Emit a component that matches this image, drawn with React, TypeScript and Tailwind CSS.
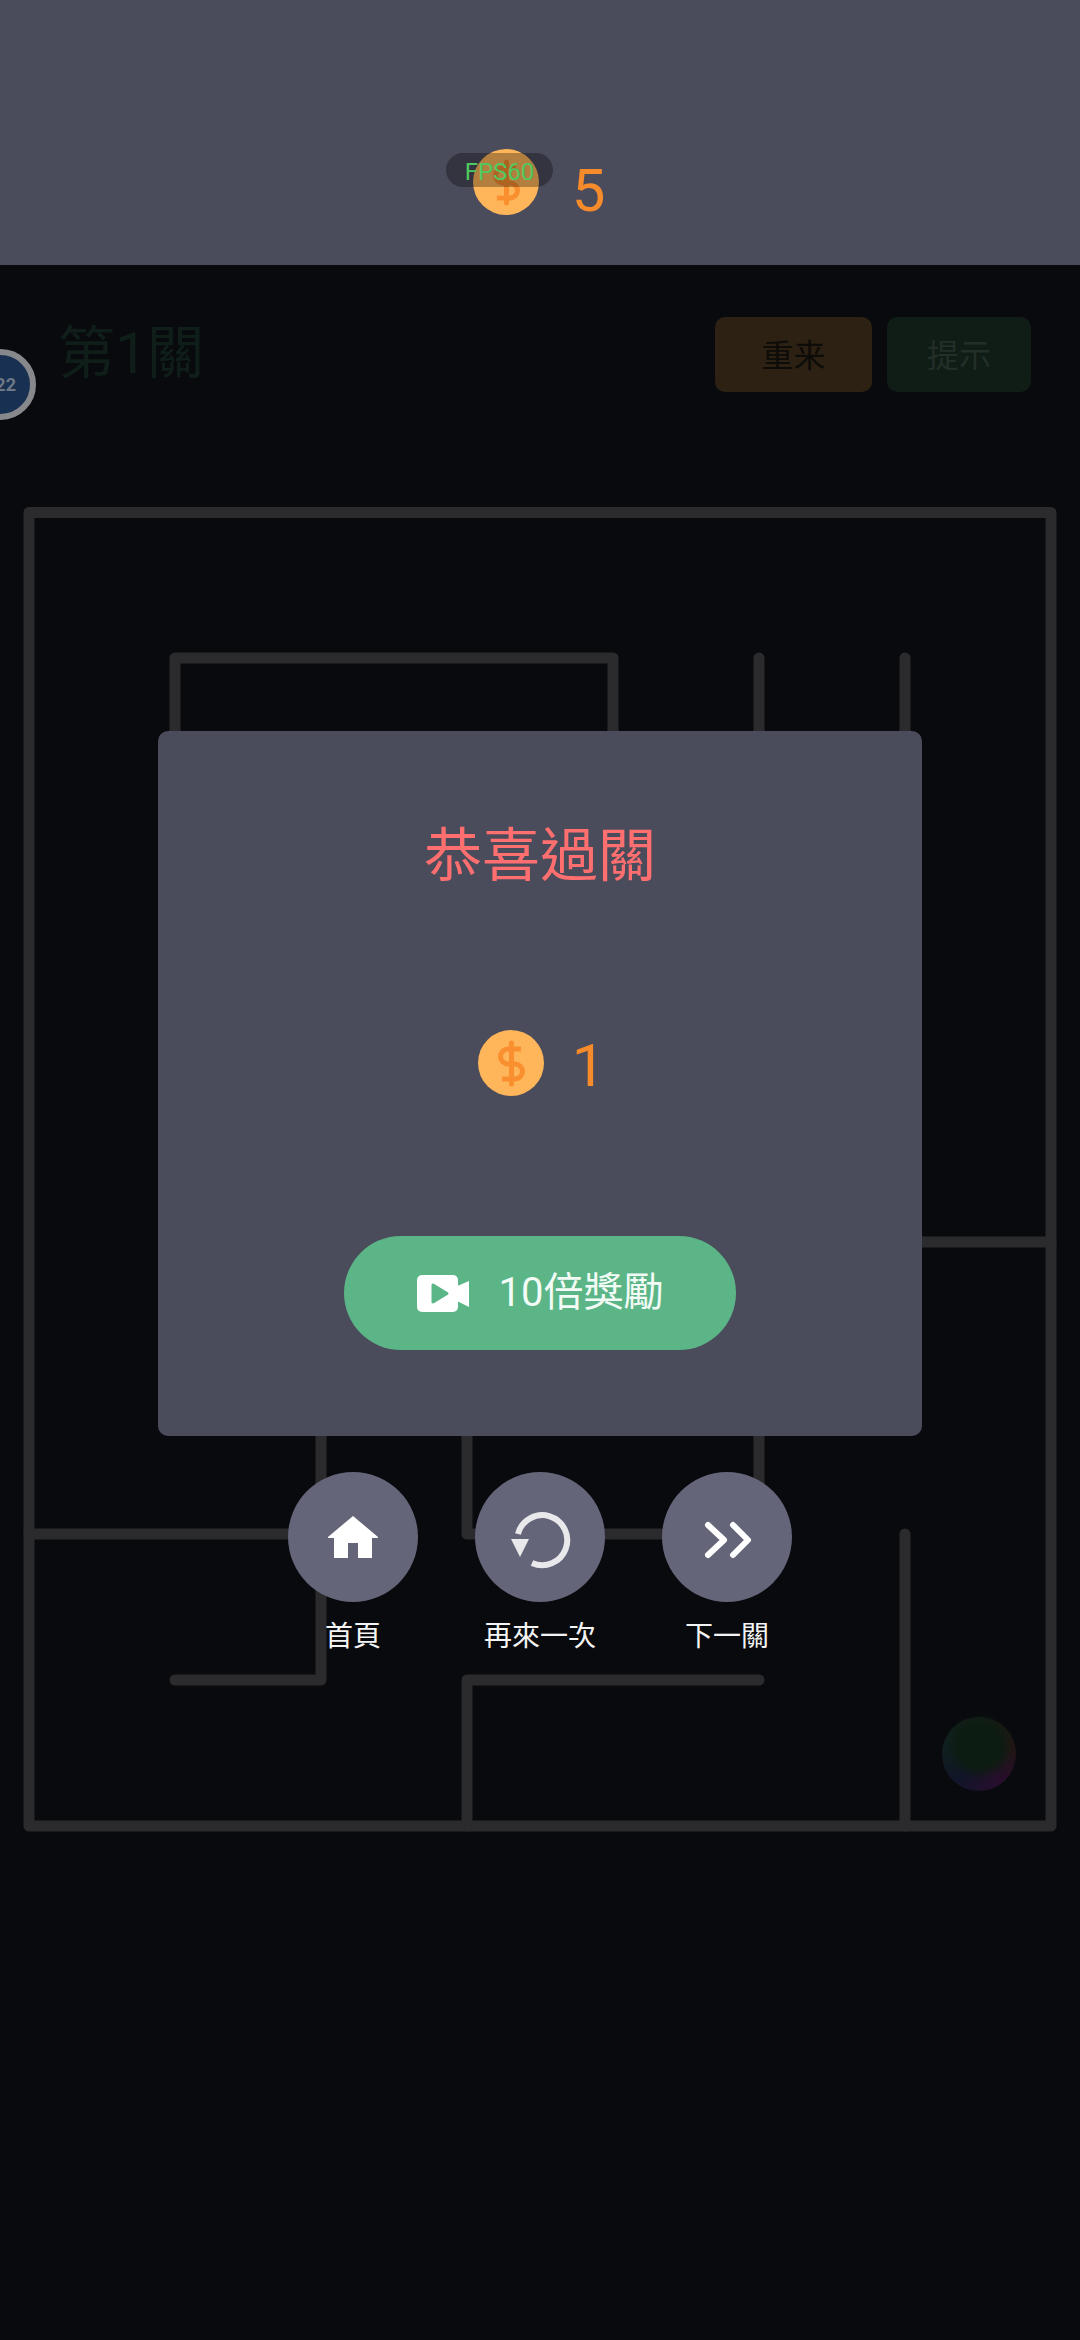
const cjk = "font-['Roboto','Noto_Sans_CJK_TC',sans-serif]";

const walls = [
  "M29 512.5 H1051 V1826 H29 Z",
  "M175 731 V658 H613 V731",
  "M759 658 V731",
  "M905 658 V731",
  "M922 1242 H1051",
  "M29 1534 H321",
  "M321 1435 V1680 H175",
  "M467 1435 V1534 H759 V1435",
  "M467 1826 V1680 H759",
  "M905 1826 V1534",
];

function Coin() {
  return (
    <svg viewBox="0 0 66 66" className="size-[66px] shrink-0">
      <circle cx="33" cy="33" r="33" fill="#ffb65a" />
      <path d="M43 19 H30 A7.5 7.5 0 0 0 30 34 H37 A7.5 7.5 0 0 1 37 49 H24" fill="none" stroke="#f98f2e" strokeWidth="5" />
      <path d="M33.5 13 V54" stroke="#f98f2e" strokeWidth="5" strokeLinecap="round" />
    </svg>
  );
}

function RoundAction({ label, children }: { label: string; children: React.ReactNode }) {
  return (
    <div className="flex w-[130px] flex-col items-center">
      <div className="size-[130px] rounded-full bg-[#65657a]">
        <svg viewBox="0 0 130 130" className="size-[130px]">{children}</svg>
      </div>
      <span className="mt-[15px] whitespace-nowrap text-[28px] leading-[40px] text-[#f4f4f4]">{label}</span>
    </div>
  );
}

export default function App() {
  return (
    <div className={`relative h-[2340px] w-[1080px] overflow-hidden bg-[#090a0e] ${cjk}`}>
      {/* top banner */}
      <div className="relative flex h-[265px] items-start justify-center bg-[#4a4b5b] pr-[2px] pt-[149px]">
        <Coin />
        <span className="ml-[33px] mt-[9px] text-[60px] leading-[66px] text-[#f68b2c]">5</span>
        <div className="absolute left-[446px] top-[153px] flex h-[34px] w-[107px] items-center justify-center rounded-full bg-black/30 pt-[4px] text-[24px] text-[#4fc95f]">
          FPS60
        </div>
      </div>

      {/* level header, dimmed by the overlay */}
      <div className="flex h-[235px] items-start justify-between pl-[58px] pr-[49px] pt-[52px]">
        <span className="mt-[2px] text-[57px] leading-[70px] text-[#0f1e19]">第1關</span>
        <div className="flex gap-[15px]">
          <div className="flex h-[75px] w-[157px] items-center justify-center rounded-[10px] bg-[#2c2112] pt-[2px] text-[32px] text-[#0e0c08]">重来</div>
          <div className="flex h-[75px] w-[144px] items-center justify-center rounded-[10px] bg-[#101c16] pt-[2px] text-[32px] text-[#232e29]">提示</div>
        </div>
      </div>
      <div className="absolute left-[-35px] top-[349px] flex size-[71px] items-center justify-end rounded-full border-[6px] border-[#87888c] bg-[#183152] pr-[14px] text-[18px] font-bold text-[#6f7885]">
        22
      </div>

      {/* maze */}
      <svg viewBox="0 500 1080 1340" className="block h-[1340px] w-[1080px]">
        {walls.map((d) => (
          <path key={d} d={d} fill="none" stroke="#2b2b2d" strokeWidth="11" strokeLinecap="round" strokeLinejoin="round" />
        ))}
      </svg>
      <div className="absolute left-[942px] top-[1717px] size-[74px] rounded-full bg-[conic-gradient(#121e16,#211612,#280e2e,#12152a,#10201e,#121e16)]">
        <div className="absolute left-[10px] top-[2px] size-[56px] rounded-full bg-[#0d1c12] blur-[4px]" />
      </div>

      {/* result dialog */}
      <div className="absolute inset-0 flex flex-col items-center pt-[731px]">
        <div className="flex h-[705px] w-[764px] flex-col items-center rounded-[10px] bg-[#4a4b5b] pt-[85px]">
          <div className="text-[58px] leading-[80px] text-[#ff6f70]">恭喜過關</div>
          <div className="mt-[134px] flex items-start pl-[3px]">
            <Coin />
            <span className="ml-[28px] mt-[3px] text-[60px] leading-[66px] text-[#f68b2c]">1</span>
          </div>
          <div className="mt-[137px] flex h-[114px] w-[392px] items-center justify-center rounded-full bg-[#5bb586] text-white">
            <svg viewBox="0 0 52 37" className="h-[37px] w-[52px]">
              <rect width="41" height="37" rx="5" fill="#fff" />
              <path d="M38 12 L52 6 V32 L38 25 Z" fill="#fff" />
              <path d="M16 10 L30 18.5 L16 27 Z" fill="#5bb586" stroke="#5bb586" strokeWidth="3" strokeLinejoin="round" />
            </svg>
            <span className="ml-[30px] text-[40px] leading-[56px] text-[#f2fbf6]">10倍獎勵</span>
          </div>
        </div>

        <div className="mt-[36px] flex gap-[57px]">
          <RoundAction label="首頁">
            <path d="M65 44 L90 65 V66 H84 V86 H70 V71 H60 V86 H46 V66 H40 V65 Z" fill="#fff" />
          </RoundAction>
          <RoundAction label="再來一次">
            <path d="M57 91 A25 25 0 1 0 43 62" fill="none" stroke="#e9e9ec" strokeWidth="6" />
            <path d="M36 67 H54 L45 85 Z" fill="#e9e9ec" />
          </RoundAction>
          <RoundAction label="下一關">
            <path d="M46 53 L62 68 L46 83 M71 53 L86 68 L71 83" fill="none" stroke="#fff" strokeWidth="6" strokeLinecap="round" strokeLinejoin="round" />
          </RoundAction>
        </div>
      </div>
    </div>
  );
}
